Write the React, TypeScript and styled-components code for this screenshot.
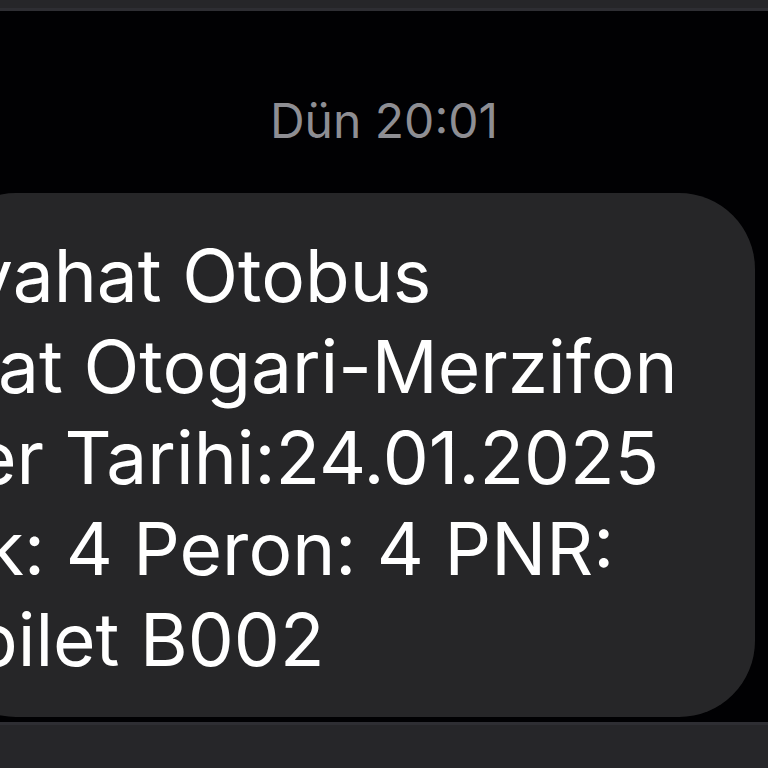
import styled, { createGlobalStyle } from "styled-components";

const GlobalStyle = createGlobalStyle`
  html, body {
    margin: 0;
    padding: 0;
    background: #000;
    overflow: hidden;
  }
`;

const Screen = styled.div`
  width: 768px;
  height: 768px;
  display: flex;
  flex-direction: column;
  background: #010103;
  font-family: Inter, "Liberation Sans", sans-serif;
  overflow: hidden;
`;

const Bar = styled.div<{ $edge: "top" | "bottom" }>`
  background: #262629;
  flex: 0 0 auto;
  height: ${({ $edge }) => ($edge === "top" ? "8px" : "43px")};
  border-${({ $edge }) => ($edge === "top" ? "bottom" : "top")}: 3px solid #2e2e33;
`;

const Thread = styled.div`
  flex: 1;
  display: flex;
  flex-direction: column;
  padding-top: 81px;
  padding-bottom: 5px;
`;

const Timestamp = styled.div`
  text-align: center;
  color: #8e8e93;
  font-size: 48px;
  line-height: 58px;
  font-weight: 400;
  margin-bottom: 43px;
`;

const Bubble = styled.div`
  margin-left: -60px;
  margin-right: 13px;
  padding: 37px 0 32px 60px;
  background: #262628;
  border-radius: 76px;
  color: #fff;
  font-size: 73px;
  line-height: 91px;
  white-space: nowrap;
  overflow: hidden;
`;

const Line = styled.div<{ $shift: number }>`
  margin-left: ${({ $shift }) => $shift}px;
`;

const lines = [
  { text: "yahat Otobus", shift: -28 },
  { text: "at Otogari-Merzifon", shift: -2 },
  { text: "er Tarihi:24.01.2025", shift: -26 },
  { text: "k: 4 Peron: 4 PNR:", shift: -16 },
  { text: "bilet B002", shift: -27 },
];

export default function App() {
  return (
    <>
      <GlobalStyle />
      <Screen>
        <Bar $edge="top" />
        <Thread>
          <Timestamp>Dün 20:01</Timestamp>
          <Bubble>
            {lines.map((l) => (
              <Line key={l.text} $shift={l.shift}>
                {l.text}
              </Line>
            ))}
          </Bubble>
        </Thread>
        <Bar $edge="bottom" />
      </Screen>
    </>
  );
}
